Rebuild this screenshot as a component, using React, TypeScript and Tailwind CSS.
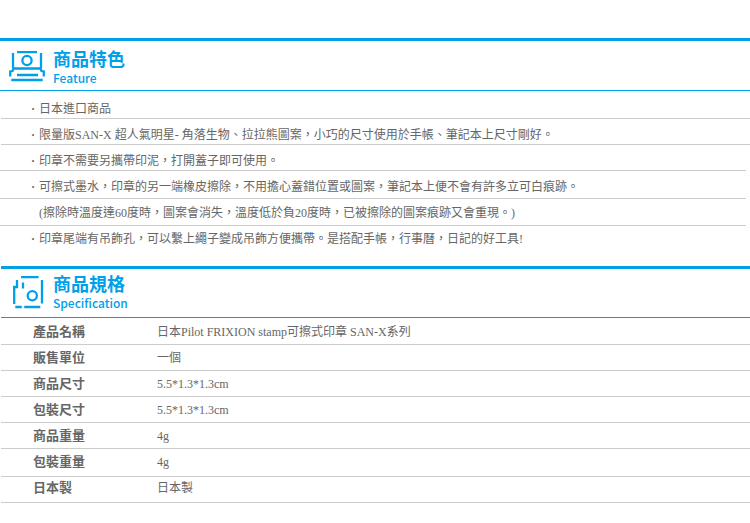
import type { ReactNode } from "react";

interface Feature {
  text: string;
  spacing: string;
  indent?: boolean;
}

interface Spec {
  label: string;
  value: string;
  spacing: string;
}

const features: Feature[] = [
  { text: "日本進口商品", spacing: "ml-px pt-2.5 pb-px pl-[30px] border-b" },
  {
    text: "限量版SAN-X 超人氣明星- 角落生物、拉拉熊圖案，小巧的尺寸使用於手帳、筆記本上尺寸剛好。",
    spacing: "ml-px pt-2 pb-px pl-[30px] border-b",
  },
  {
    text: "印章不需要另攜帶印泥，打開蓋子即可使用。",
    spacing: "mr-1 pt-2 pb-px pl-[31px] border-b",
  },
  {
    text: "可擦式墨水，印章的另一端橡皮擦除，不用擔心蓋錯位置或圖案，筆記本上便不會有許多立可白痕跡。",
    spacing: "mr-1 pt-2 pb-[3px] pl-[31px] border-b",
  },
  {
    text: "(擦除時溫度達60度時，圖案會消失，溫度低於負20度時，已被擦除的圖案痕跡又會重現。)",
    spacing: "mr-1 pt-1.5 pb-1 pl-[31px] border-b",
    indent: true,
  },
  {
    text: "印章尾端有吊飾孔，可以繫上繩子變成吊飾方便攜帶。是搭配手帳，行事曆，日記的好工具!",
    spacing: "mr-1 pt-[5px] pb-[19px] pl-[31px]",
  },
];

const specs: Spec[] = [
  { label: "產品名稱", value: "日本Pilot FRIXION stamp可擦式印章 SAN-X系列", spacing: "pt-1.5 pb-1" },
  { label: "販售單位", value: "一個", spacing: "pt-[5px] pb-1" },
  { label: "商品尺寸", value: "5.5*1.3*1.3cm", spacing: "pt-[5px] pb-1" },
  { label: "包裝尺寸", value: "5.5*1.3*1.3cm", spacing: "pt-[5px] pb-1" },
  { label: "商品重量", value: "4g", spacing: "pt-[5px] pb-1" },
  { label: "包裝重量", value: "4g", spacing: "pt-[5px] pb-1.5" },
  { label: "日本製", value: "日本製", spacing: "pt-[3px] pb-1.5" },
];

function FeatureIcon() {
  return (
    <svg width="36" height="31" viewBox="0 0 36 31" fill="none" stroke="#00a0e9" strokeWidth="2.3" aria-hidden="true">
      <path d="M8 1.2H28M4 2V17M32 2V17" />
      <circle cx="18" cy="9.5" r="4.6" />
      <path d="M1.2 25.5V20.5L3.5 20L4.5 17.5H31.5L32.5 20L34.8 20.5V25.5M8 24H29M2.3 29H33.7" />
    </svg>
  );
}

function SpecificationIcon() {
  return (
    <svg width="31" height="33" viewBox="0 0 31 33" fill="none" stroke="#00a0e9" strokeWidth="2.3" aria-hidden="true">
      <path d="M8 1.2H25.5M29 4V27.5M2.3 31H8.8M11.2 31H27.3" />
      <path d="M4 4V11H1.2V28M10 6.5V12.5" />
      <circle cx="19.3" cy="19.7" r="4.6" />
    </svg>
  );
}

interface SectionHeaderProps {
  icon: ReactNode;
  title: string;
  subtitle: string;
  iconClass: string;
  titleClass: string;
}

function SectionHeader({ icon, title, subtitle, iconClass, titleClass }: SectionHeaderProps) {
  return (
    <div className="flex border-t-3 border-b border-[#00a0e9] text-[#00a0e9]">
      <div className={`shrink-0 ${iconClass}`}>{icon}</div>
      <h2 className={`font-['Noto_Sans_CJK_TC',sans-serif] ${titleClass}`}>
        <span className="block text-lg leading-5 font-bold">{title}</span>
        <span className="block text-xs leading-5 font-medium">{subtitle}</span>
      </h2>
    </div>
  );
}

export default function App() {
  return (
    <main className="bg-white pt-[38px] font-['Liberation_Serif','Noto_Sans_CJK_TC',serif] text-xs text-[#666]" lang="zh-Hant">
      <section>
        <SectionHeader
          icon={<FeatureIcon />}
          title="商品特色"
          subtitle="Feature"
          iconClass="w-[53px] pt-2.5 pl-[9px]"
          titleClass="pt-[7px] pb-0.5"
        />
        <ul>
          {features.map((feature) => (
            <li key={feature.text} className={`flex border-[#ccc] leading-4 ${feature.spacing}`}>
              <span className="w-2 shrink-0 font-bold">{feature.indent ? "" : "·"}</span>
              <span>{feature.text}</span>
            </li>
          ))}
        </ul>
      </section>

      <section className="ml-px">
        <SectionHeader
          icon={<SpecificationIcon />}
          title="商品規格"
          subtitle="Specification"
          iconClass="w-[52px] pt-[7px] pl-3"
          titleClass="pt-1 pb-1"
        />
        <table className="w-full border-collapse text-left">
          <tbody>
            {specs.map((spec) => (
              <tr key={spec.label} className="border-b border-[#ccc] leading-4">
                <th scope="row" className={`w-[156px] pl-8 text-[13px] leading-4 font-bold ${spec.spacing}`}>
                  {spec.label}
                </th>
                <td className={spec.spacing}>{spec.value}</td>
              </tr>
            ))}
          </tbody>
        </table>
      </section>
    </main>
  );
}
